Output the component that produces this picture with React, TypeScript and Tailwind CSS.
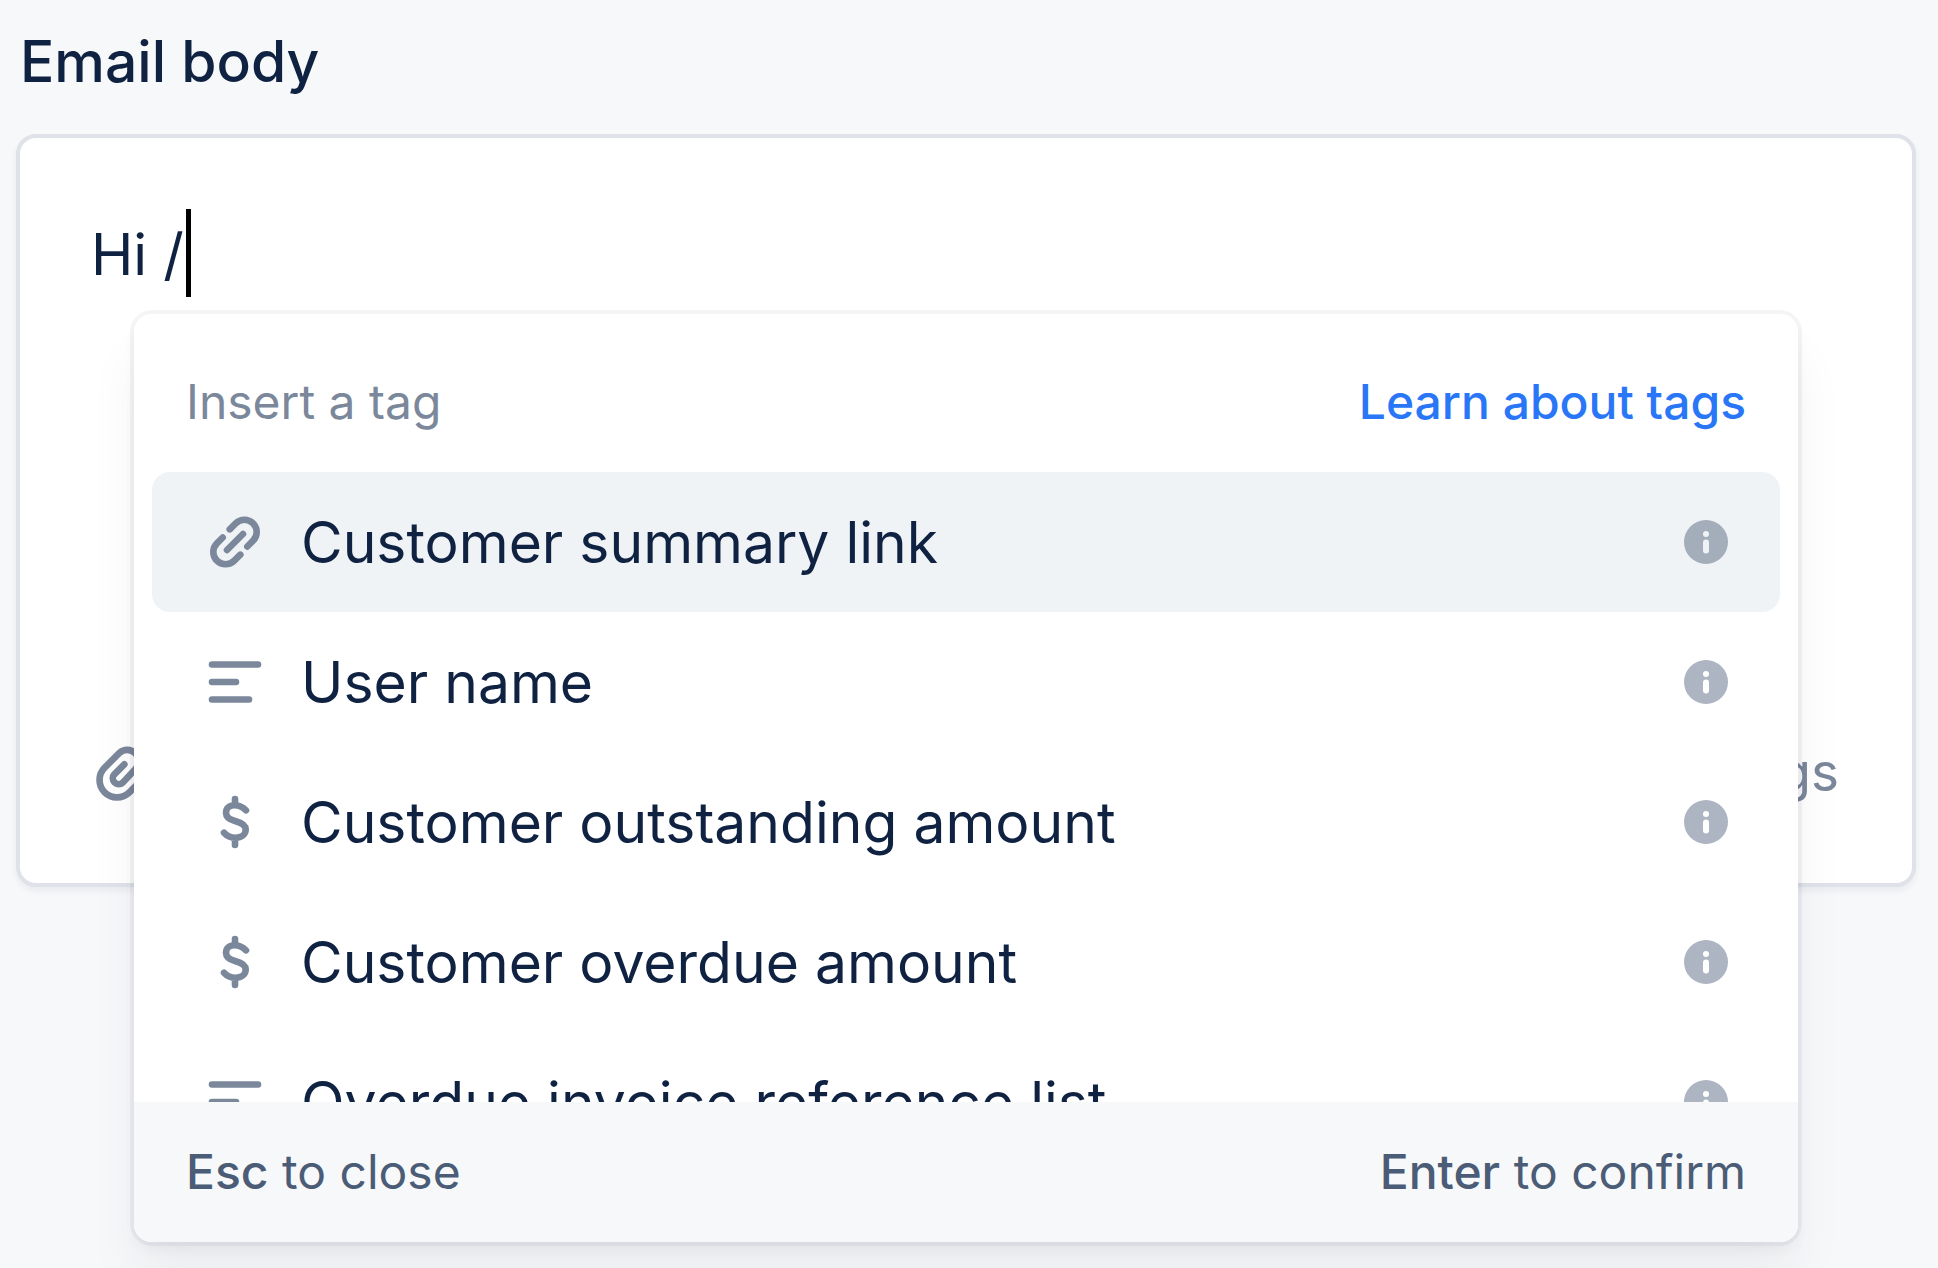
import { useState } from 'react';
import clsx from 'clsx';

type TagKind = 'link' | 'text' | 'money';

interface Tag {
    name: string;
    kind: TagKind;
}

const tags: Tag[] = [
    { name: 'Customer summary link', kind: 'link' },
    { name: 'User name', kind: 'text' },
    { name: 'Customer outstanding amount', kind: 'money' },
    { name: 'Customer overdue amount', kind: 'money' },
    { name: 'Overdue invoice reference list', kind: 'text' },
];

const iconPaths: Record<TagKind, string> = {
    link: 'M22.7 15.3L28.7 9.3A12.3 12.3 0 0 1 46.1 26.7L40.3 32.5M33.3 40.7L27.3 46.7A12.3 12.3 0 0 1 9.9 29.3L15.7 23.5M36 20L20 36',
    text: 'M5 10.5H51M5 28H29M5 45.5H42',
    money: 'M39 16.3C35 12.5 31 11.3 27.5 11.3C22 11.3 19 14.5 19 18.7C19 23.5 22.5 25.5 28 27C35 28.8 38.7 31 38.7 35.5C38.7 40.5 34.5 43.7 28.5 43.7C23.5 43.7 20 42 17 38.7M28 5V11M28 44V51',
};

function TagIcon({ kind }: { kind: TagKind }) {
    return (
        <svg className="size-14 shrink-0 text-[#7b879a]" viewBox="0 0 56 56" fill="none" stroke="currentColor" strokeWidth="6.6" strokeLinecap="round" strokeLinejoin="round" aria-hidden="true">
            <path d={iconPaths[kind]} />
        </svg>
    );
}

function InfoIcon({ active }: { active: boolean }) {
    return (
        <svg className="size-11 shrink-0" viewBox="0 0 44 44" aria-hidden="true">
            <circle cx="22" cy="22" r="22" className={active ? 'fill-[#a4aebb]' : 'fill-[#adb5c2]'} />
            <g className={active ? 'fill-[#eff3f6]' : 'fill-white'}>
                <circle cx="22" cy="14" r="3" />
                <rect x="19" y="19.6" width="6" height="13.8" rx="3" />
            </g>
        </svg>
    );
}

function PaperclipIcon() {
    return (
        <svg className="size-[60px]" viewBox="92 130 180 180" fill="none" stroke="currentColor" strokeWidth="20" strokeLinecap="round" strokeLinejoin="round" aria-hidden="true">
            <path d="M192 194L162 224A17.7 17.7 0 0 0 187 249L226 207A34 34 0 0 0 178 159L133 204A52 52 0 0 0 207 278L246 239" />
        </svg>
    );
}

export default function App() {
    const [message, setMessage] = useState<string>('Hi /');
    const [active, setActive] = useState<number>(0);

    return (
        <main className="min-h-screen bg-[#f7f8fa] pt-6 pr-[22px] pl-4 font-['Inter',sans-serif] text-[#102242]">
            <label htmlFor="email-body" className="block px-1 text-[57px] leading-[76px] font-medium">
                Email body
            </label>

            <div className="relative mt-[34px] rounded-[20px] border-4 border-[#dfe2e8] bg-white px-[71px] pt-[71px] pb-[70px] shadow-[0_4px_6px_rgba(18,33,63,0.06)]">
                <div className="flex min-h-[524px] items-start">
                    <textarea
                        id="email-body"
                        rows={1}
                        className="field-sizing-content resize-none overflow-hidden pt-0.5 text-[57px] leading-[88px] outline-none"
                        value={message}
                        onChange={(e) => setMessage(e.target.value)}
                    />
                    <span className="ml-0.5 h-[88px] w-[5px] bg-black" />
                </div>
                <div className="flex h-20 items-center justify-between text-[53px] text-[#7b879a]">
                    <button type="button" aria-label="Attach file">
                        <PaperclipIcon />
                    </button>
                    <button type="button" className="pr-0.5">Insert tags</button>
                </div>

                {/* Tag picker */}
                <div className="absolute top-[176px] right-[114px] left-[114px] rounded-[18px] shadow-[0_0_0_4px_rgba(18,33,63,0.045),0_9px_13px_rgba(18,33,63,0.04),0_39px_52px_rgba(18,33,63,0.05)]">
                    <div className="overflow-hidden rounded-[18px] bg-white">
                        <div className="flex h-[158px] items-center justify-between px-[52px] pt-[18px] text-[48px]">
                            <span className="text-[#7b879a]">Insert a tag</span>
                            <a href="#tags" className="font-medium text-[#2977f7]">Learn about tags</a>
                        </div>
                        <div className="h-[630px] overflow-hidden px-[18px]" role="listbox" aria-label="Tags">
                            {tags.map((tag, index) => (
                                <button
                                    key={tag.name}
                                    type="button"
                                    role="option"
                                    aria-selected={active === index}
                                    onClick={() => setActive(index)}
                                    className={clsx(
                                        'flex h-[140px] w-full items-center rounded-[18px] pr-[52px] pl-[55px] text-left',
                                        active === index && 'bg-[#eff3f6]'
                                    )}
                                >
                                    <TagIcon kind={tag.kind} />
                                    <span className="ml-[38px] flex-1 pt-0.5 text-[57px]">{tag.name}</span>
                                    <InfoIcon active={active === index} />
                                </button>
                            ))}
                        </div>
                        <div className="flex h-[140px] items-center justify-between bg-[#f7f8fa] px-[52px] text-[48px] text-[#4b5c76]">
                            <span><kbd className="font-['Inter',sans-serif] text-[48px] font-medium">Esc</kbd> to close</span>
                            <span><kbd className="font-['Inter',sans-serif] text-[48px] font-medium">Enter</kbd> to confirm</span>
                        </div>
                    </div>
                </div>
            </div>
        </main>
    );
}
